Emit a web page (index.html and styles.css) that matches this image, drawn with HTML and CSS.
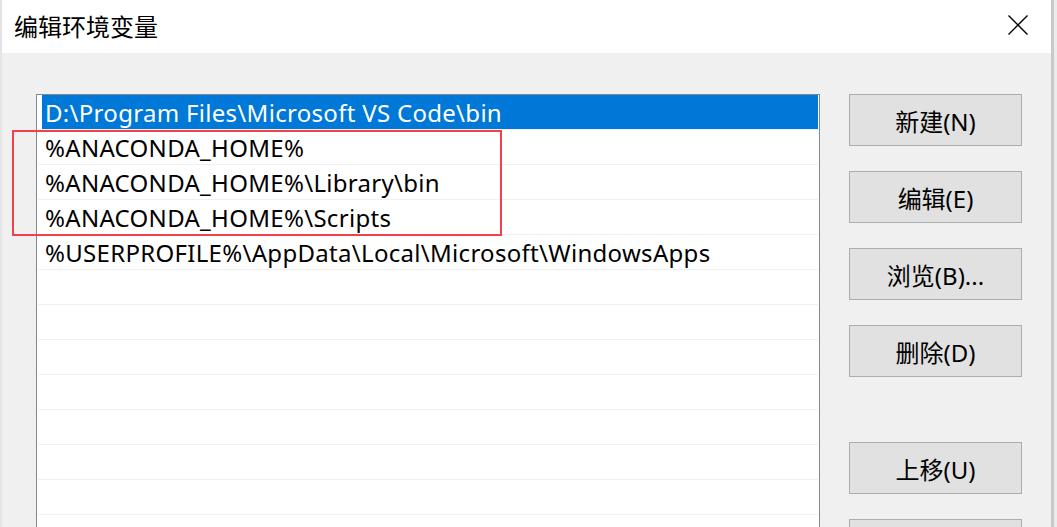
FILE: index.html
```html
<!DOCTYPE html>
<html lang="zh-CN">
<head>
<meta charset="utf-8">
<title>编辑环境变量</title>
<link rel="stylesheet" href="styles.css">
</head>
<body>
<div class="screen">
  <div class="edge-left"></div>
  <div class="dialog">
    <div class="titlebar">
      <span class="title">编辑环境变量</span>
      <button class="close" aria-label="关闭">
        <svg width="20" height="20" viewBox="0 0 20 20"><path d="M0.5 0.5 L19.5 19.5 M19.5 0.5 L0.5 19.5" stroke="#000" stroke-width="1.4" fill="none"/></svg>
      </button>
    </div>
    <div class="content">
      <div class="list">
        <div class="row selected"><span class="cell">D:\Program Files\Microsoft VS Code\bin</span></div>
        <div class="row"><span class="cell">%ANACONDA_HOME%</span></div>
        <div class="row"><span class="cell">%ANACONDA_HOME%\Library\bin</span></div>
        <div class="row"><span class="cell">%ANACONDA_HOME%\Scripts</span></div>
        <div class="row"><span class="cell">%USERPROFILE%\AppData\Local\Microsoft\WindowsApps</span></div>
        <div class="row"><span class="cell"></span></div>
        <div class="row"><span class="cell"></span></div>
        <div class="row"><span class="cell"></span></div>
        <div class="row"><span class="cell"></span></div>
        <div class="row"><span class="cell"></span></div>
        <div class="row"><span class="cell"></span></div>
        <div class="row"><span class="cell"></span></div>
        <div class="row"><span class="cell"></span></div>
      </div>
      <div class="buttons">
        <button class="btn">新建(N)</button>
        <button class="btn">编辑(E)</button>
        <button class="btn">浏览(B)...</button>
        <button class="btn">删除(D)</button>
        <button class="btn spaced">上移(U)</button>
        <button class="btn last"></button>
      </div>
      <div class="highlight"></div>
    </div>
  </div>
  <div class="edge-right"></div>
</div>
</body>
</html>
```

FILE: styles.css
```css
* { box-sizing: border-box; }
html, body {
  margin: 0;
  padding: 0;
  width: 1057px;
  height: 527px;
  overflow: hidden;
  background: #f0f0f0;
  font-family: "Noto Sans", "Noto Sans CJK SC", sans-serif;
}
.screen {
  display: flex;
  width: 1057px;
  height: 527px;
}
.edge-left {
  width: 2px;
  background: #e4e4e4;
  flex: none;
}
.edge-right {
  width: 6px;
  flex: none;
  background: linear-gradient(to right, #c9c9c9 0, #c9c9c9 3px, #ececec 3px);
}
.dialog {
  flex: 1;
  display: flex;
  flex-direction: column;
  background: #f0f0f0;
  position: relative;
}
.titlebar {
  height: 53px;
  background: #ffffff;
  display: flex;
  align-items: center;
  justify-content: space-between;
  padding-left: 12px;
  flex: none;
}
.title {
  font-family: "Noto Sans CJK SC", sans-serif;
  font-size: 24px;
  color: #000;
  margin-top: -2px;
}
.close {
  width: 46px;
  height: 53px;
  border: none;
  background: transparent;
  padding: 0;
  margin-right: 10px;
  display: flex;
  align-items: center;
  justify-content: center;
  margin-top: -3px;
}
.content {
  flex: 1;
  display: flex;
  padding: 41px 0 0 34px;
  position: relative;
}
.list {
  width: 784px;
  background: #fff;
  border: 1px solid #828790;
  border-bottom: none;
  flex: none;
  align-self: flex-start;
  padding-right: 1px;
}
.row {
  height: 35px;
  border-bottom: 1px solid #f0f0f0;
  margin-left: 1px;
  display: flex;
}
.cell {
  flex: 1;
  margin-left: 4px;
  padding-left: 3px;
  padding-top: 1px;
  font-size: 24px;
  letter-spacing: 0.3px;
  line-height: 33px;
  color: #000;
  white-space: nowrap;
  overflow: hidden;
}
.row.selected .cell {
  background: #0078d7;
  color: #fff;
}
.buttons {
  margin-left: 29px;
  width: 173px;
  display: flex;
  flex-direction: column;
  gap: 25px;
  flex: none;
}
.btn {
  height: 52px;
  flex: none;
  background: #e1e1e1;
  border: 1px solid #adadad;
  font-family: "Noto Sans", "Noto Sans CJK SC", sans-serif;
  font-size: 24px;
  color: #000;
  padding: 0;
}
.btn.spaced { margin-top: 40px; }
.highlight {
  position: absolute;
  left: 10px;
  top: 77px;
  width: 490px;
  height: 106px;
  border: 2px solid #f0424a;
  pointer-events: none;
}
```
